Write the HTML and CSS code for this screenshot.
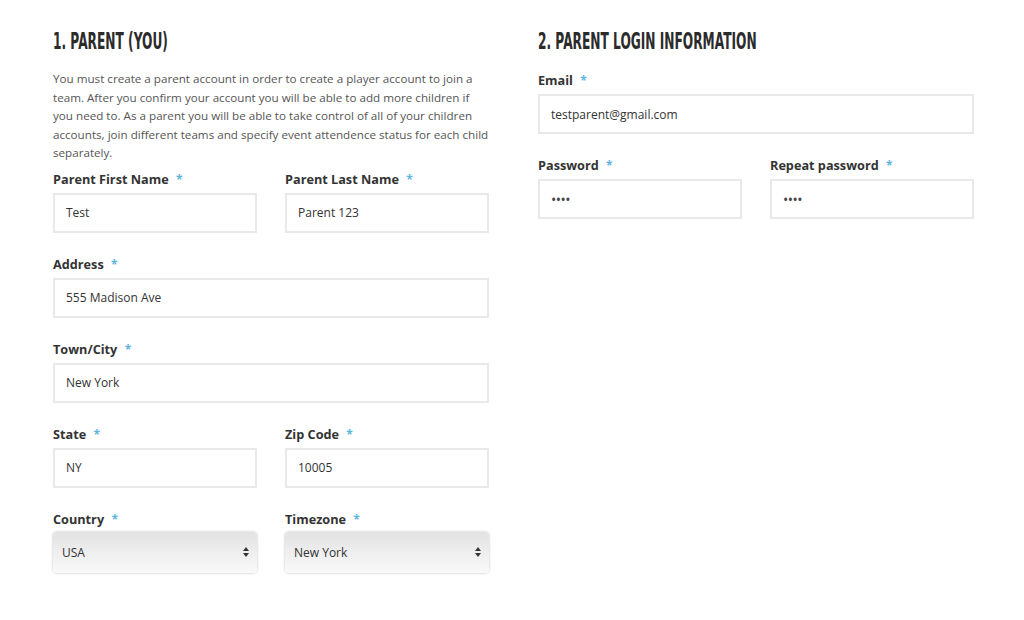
FILE: index.html
```html
<!DOCTYPE html>
<html>
<head>
<meta charset="utf-8">
<link rel="stylesheet" href="styles.css">
</head>
<body>
<div class="page">
  <section class="col">
    <h2 class="title"><span class="title-text">1. PARENT (YOU)</span></h2>
    <p class="intro">You must create a parent account in order to create a player account to join a team. After you confirm your account you will be able to add more children if you need to. As a parent you will be able to take control of all of your children accounts, join different teams and specify event attendence status for each child separately.</p>
    <div class="row">
      <div class="field">
        <div class="label">Parent First Name <span class="req">*</span></div>
        <div class="input">Test</div>
      </div>
      <div class="field">
        <div class="label">Parent Last Name <span class="req">*</span></div>
        <div class="input">Parent 123</div>
      </div>
    </div>
    <div class="field">
      <div class="label">Address <span class="req">*</span></div>
      <div class="input">555 Madison Ave</div>
    </div>
    <div class="field">
      <div class="label">Town/City <span class="req">*</span></div>
      <div class="input">New York</div>
    </div>
    <div class="row">
      <div class="field">
        <div class="label">State <span class="req">*</span></div>
        <div class="input">NY</div>
      </div>
      <div class="field">
        <div class="label">Zip Code <span class="req">*</span></div>
        <div class="input">10005</div>
      </div>
    </div>
    <div class="row">
      <div class="field">
        <div class="label">Country <span class="req">*</span></div>
        <div class="select"><span>USA</span><span class="arrows"><i class="up"></i><i class="down"></i></span></div>
      </div>
      <div class="field">
        <div class="label">Timezone <span class="req">*</span></div>
        <div class="select"><span>New York</span><span class="arrows"><i class="up"></i><i class="down"></i></span></div>
      </div>
    </div>
  </section>
  <section class="col">
    <h2 class="title"><span class="title-text">2. PARENT LOGIN INFORMATION</span></h2>
    <div class="field first">
      <div class="label">Email <span class="req">*</span></div>
      <div class="input">testparent@gmail.com</div>
    </div>
    <div class="row">
      <div class="field">
        <div class="label">Password <span class="req">*</span></div>
        <div class="input dots">&bull;&bull;&bull;&bull;</div>
      </div>
      <div class="field">
        <div class="label">Repeat password <span class="req">*</span></div>
        <div class="input dots">&bull;&bull;&bull;&bull;</div>
      </div>
    </div>
  </section>
</div>
</body>
</html>
```

FILE: styles.css
```css
html, body {
  margin: 0;
  padding: 0;
  background: #fff;
}
body {
  font-family: "Open Sans", "Liberation Sans", sans-serif;
  color: #333;
}
.page {
  display: flex;
  gap: 49px;
  padding: 28px 0 0 53px;
}
.col {
  width: 436px;
}
.title {
  margin: 0;
  font-family: "DejaVu Sans", "Liberation Sans", sans-serif;
  font-weight: bold;
  font-size: 23px;
  line-height: 26px;
  color: #2b2b2b;
  white-space: nowrap;
}
.title-text {
  display: inline-block;
  transform: scaleX(0.53);
  transform-origin: left center;
}
.intro {
  margin: 16px 0 7px;
  font-size: 11.65px;
  line-height: 18.5px;
  color: #555;
}
.row {
  display: flex;
  gap: 28px;
}
.row .field {
  flex: 1;
}
.field {
  margin-bottom: 22px;
}
.field.first {
  margin-top: 17px;
}
.label {
  font-weight: bold;
  font-size: 12.7px;
  line-height: 18px;
  color: #333;
  margin-bottom: 4px;
}
.req {
  color: #5fb4df;
  margin-left: 4px;
  font-size: 12px;
}
.input {
  box-sizing: border-box;
  height: 40px;
  border: 2px solid #e9e9e9;
  padding: 0 11px;
  display: flex;
  align-items: center;
  font-size: 12px;
  color: #333;
  background: #fff;
}
.input.dots {
  font-size: 14px;
  letter-spacing: -0.5px;
  color: #444;
}
.select {
  box-sizing: border-box;
  height: 41px;
  border-radius: 4px;
  background: linear-gradient(#e2e2e2, #f1f1f1 60%, #f9f9f9);
  box-shadow: 0 0 2px 1px rgba(0,0,0,0.12);
  padding: 0 8px 0 9px;
  display: flex;
  align-items: center;
  justify-content: space-between;
  font-size: 12px;
  color: #333;
  margin-top: -1px;
}
.arrows {
  display: flex;
  flex-direction: column;
  gap: 2px;
}
.arrows i {
  display: block;
  width: 0;
  height: 0;
  border-left: 3px solid transparent;
  border-right: 3px solid transparent;
}
.arrows .up {
  border-bottom: 4px solid #333;
}
.arrows .down {
  border-top: 4px solid #333;
}
```
